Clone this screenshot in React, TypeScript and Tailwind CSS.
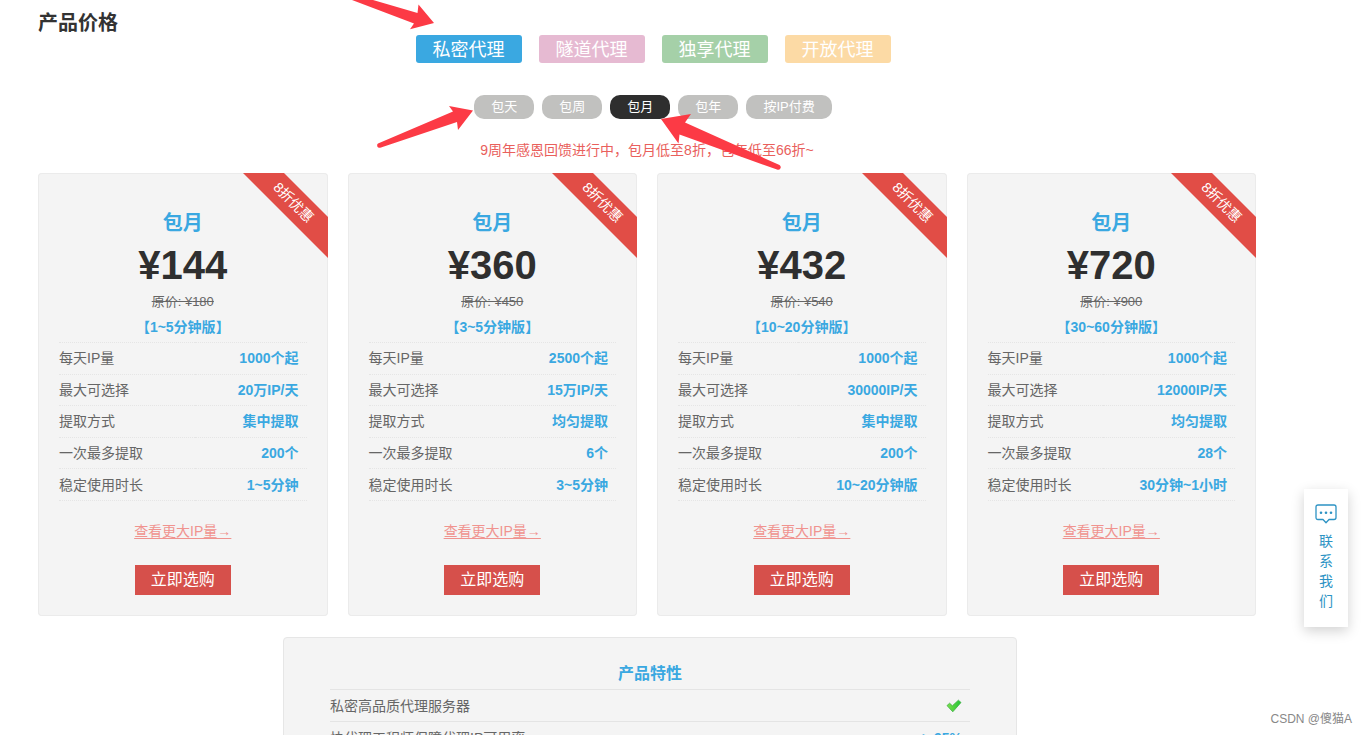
const PRODUCTS = [
  { name: "私密代理", className: "bg-[#3aa8e1]" },
  { name: "隧道代理", className: "bg-[#e6bad2]" },
  { name: "独享代理", className: "bg-[#a5d0a8]" },
  { name: "开放代理", className: "bg-[#fcdaa5]" },
];

const PERIODS = ["包天", "包周", "包月", "包年", "按IP付费"];

const ROW_LABELS = [
  "每天IP量",
  "最大可选择",
  "提取方式",
  "一次最多提取",
  "稳定使用时长",
];

interface Plan {
  price: number;
  original: number;
  range: string;
  values: string[];
}

const PLANS: Plan[] = [
  {
    price: 144,
    original: 180,
    range: "1~5分钟版",
    values: ["1000个起", "20万IP/天", "集中提取", "200个", "1~5分钟"],
  },
  {
    price: 360,
    original: 450,
    range: "3~5分钟版",
    values: ["2500个起", "15万IP/天", "均匀提取", "6个", "3~5分钟"],
  },
  {
    price: 432,
    original: 540,
    range: "10~20分钟版",
    values: ["1000个起", "30000IP/天", "集中提取", "200个", "10~20分钟版"],
  },
  {
    price: 720,
    original: 900,
    range: "30~60分钟版",
    values: ["1000个起", "12000IP/天", "均匀提取", "28个", "30分钟~1小时"],
  },
];

export default function App() {
  return (
    <div className="relative h-screen overflow-hidden bg-white pt-3 pr-28 pl-[38px] font-['Liberation_Sans','Noto_Sans_CJK_SC',sans-serif] text-sm text-[#666]">
      <h2 className="text-xl leading-[23px] font-bold text-[#333]">产品价格</h2>
      <ProductTabs />
      <PeriodTabs current="包月" />
      <p className="mt-[21px] text-center leading-5 text-[#e9605c]">
        9周年感恩回馈进行中，包月低至8折，包年低至66折~
      </p>
      <div className="mt-[13px] grid grid-cols-4 gap-5">
        {PLANS.map((plan) => (
          <PlanCard key={plan.price} plan={plan} />
        ))}
      </div>
      <Features />
      <Arrows />
      <Contact />
      <p className="absolute right-4 bottom-2 text-xs text-[#888]">
        CSDN @傻猫A
      </p>
    </div>
  );
}

const ProductTabs = () => {
  return (
    <div className="flex justify-center gap-[17px] pl-3">
      {PRODUCTS.map(({ name, className }) => (
        <button
          key={name}
          type="button"
          className={`h-7 rounded-[3px] px-[17px] pt-0.5 text-lg leading-[26px] text-white ${className}`}
        >
          {name}
        </button>
      ))}
    </div>
  );
};

const PeriodTabs = ({ current }: { current: string }) => {
  return (
    <div className="mt-8 flex justify-center gap-2 pl-3">
      {PERIODS.map((period) => (
        <button
          key={period}
          type="button"
          className={`h-6 rounded-[10px] px-[17px] text-[13px] leading-6 text-white ${
            period === current ? "bg-[#2e2e2e]" : "bg-[#c1c1bf]"
          }`}
        >
          {period}
        </button>
      ))}
    </div>
  );
};

const PlanCard = ({ plan }: { plan: Plan }) => {
  return (
    <section className="relative flex flex-col items-center overflow-hidden rounded bg-[#f4f4f4] px-[21px] pt-9 pb-[21px] shadow-[inset_0_0_0_1px_#ebebeb]">
      <div className="absolute top-[18px] -right-12 h-[29px] w-40 rotate-45 bg-[#e14d46] pr-2 text-center leading-[29px] text-white">
        8折优惠
      </div>
      <h3 className="text-xl leading-7 font-bold text-[#3aa8e1]">包月</h3>
      <p className="text-[40px] leading-[57px] font-bold text-[#2f2f2f]">
        ¥{plan.price}
      </p>
      <del className="text-[13px] leading-4">原价: ¥{plan.original}</del>
      <table className="mt-1 h-[159px] w-full">
        <caption className="h-7 leading-[26px] font-bold text-[#3aa8e1]">
          【{plan.range}】
        </caption>
        <tbody>
          {ROW_LABELS.map((label, i) => (
            <tr key={label} className="border-y border-dotted border-[#e5e5e5]">
              <th className="text-left font-normal">{label}</th>
              <td className="pr-2 text-right font-bold text-[#3aa8e1]">
                {plan.values[i]}
              </td>
            </tr>
          ))}
        </tbody>
      </table>
      <a
        href="#more"
        className="mt-5 leading-5 text-[#f0938f] underline underline-offset-2"
      >
        查看更大IP量→
      </a>
      <button
        type="button"
        className="mt-6 h-[30px] bg-[#d6504b] px-4 text-base leading-[30px] text-white"
      >
        立即选购
      </button>
    </section>
  );
};

const Features = () => {
  return (
    <div className="mt-[21px] flex justify-center pl-1.5">
      <section className="w-full max-w-[734px] rounded border border-[#e6e6e6] bg-[#f4f4f4] px-[46px] pt-6">
        <table className="w-full">
          <caption className="h-[27px] text-base leading-6 font-bold text-[#3aa8e1]">
            产品特性
          </caption>
          <tbody>
            <tr className="h-8 border-y border-[#e4e4e4]">
              <th className="text-left font-normal">私密高品质代理服务器</th>
              <td className="pr-2">
                <CheckMark />
              </td>
            </tr>
            <tr className="h-8 border-y border-[#e4e4e4]">
              <th className="text-left font-normal">
                快代理工程师保障代理IP可用率
              </th>
              <td className="pr-2 text-right font-bold text-[#3aa8e1]">
                &gt; 95%
              </td>
            </tr>
          </tbody>
        </table>
      </section>
    </div>
  );
};

const CheckMark = () => {
  return (
    <svg
      viewBox="0 0 16 14"
      className="ml-auto h-3.5 w-4"
      role="img"
      aria-label="支持"
    >
      <defs>
        <linearGradient id="check" x1="0" y1="0" x2="1" y2="0">
          <stop offset="0" stopColor="#7ce04a" />
          <stop offset="1" stopColor="#22c436" />
        </linearGradient>
      </defs>
      <path
        d="M1 6.6 3.6 4.2 6.4 6.8 12.4 1.2 15 3.5 6.8 12.8Z"
        fill="url(#check)"
        stroke="#3fae45"
        strokeWidth="0.8"
        strokeLinejoin="round"
      />
    </svg>
  );
};

// hand-drawn pointers laid over the tabs
const Arrows = () => {
  return (
    <svg
      viewBox="0 0 500 180"
      className="pointer-events-none absolute top-0 left-[340px] h-[180px] w-[500px] fill-[#fc3a45]"
      aria-hidden="true"
    >
      <path d="M12 0 74 23.5 70 29.3 94 23 78.5 4.5 77.5 13 33 0Z" />
      <path d="M38 143.6 113 111.5 109 106 133 110.5 118 130 117 122 41 147.6Q38 148.5 37.2 146.2 36.8 144.2 38 143.6Z" />
      <path d="M321 119 351 114 345 122.5 439.5 165Q441.3 166.3 440.5 168.3 439.3 170.4 437 169.6L339.5 134.5 338.5 143.5Z" />
    </svg>
  );
};

const Contact = () => {
  return (
    <a
      href="#contact"
      className="absolute right-5 bottom-[108px] flex w-11 flex-col items-center bg-white pt-[15px] pb-4 text-[#2d93c4] shadow-[0_4px_12px_rgba(0,0,0,0.18)]"
    >
      <svg
        viewBox="0 0 22 20"
        className="h-5 w-[22px]"
        fill="none"
        stroke="currentColor"
        strokeWidth="1.3"
        strokeLinejoin="round"
        aria-hidden="true"
      >
        <path d="M3 1H19Q21 1 21 3V13.5Q21 15.5 19 15.5H14L11 18.7 8 15.5H3Q1 15.5 1 13.5V3Q1 1 3 1Z" />
        <g fill="currentColor" stroke="none">
          <circle cx="6" cy="8.8" r="1.3" />
          <circle cx="11" cy="8.8" r="1.3" />
          <circle cx="16" cy="8.8" r="1.3" />
        </g>
      </svg>
      <span className="mt-[7px] w-3.5 leading-5 break-all">联系我们</span>
    </a>
  );
};
